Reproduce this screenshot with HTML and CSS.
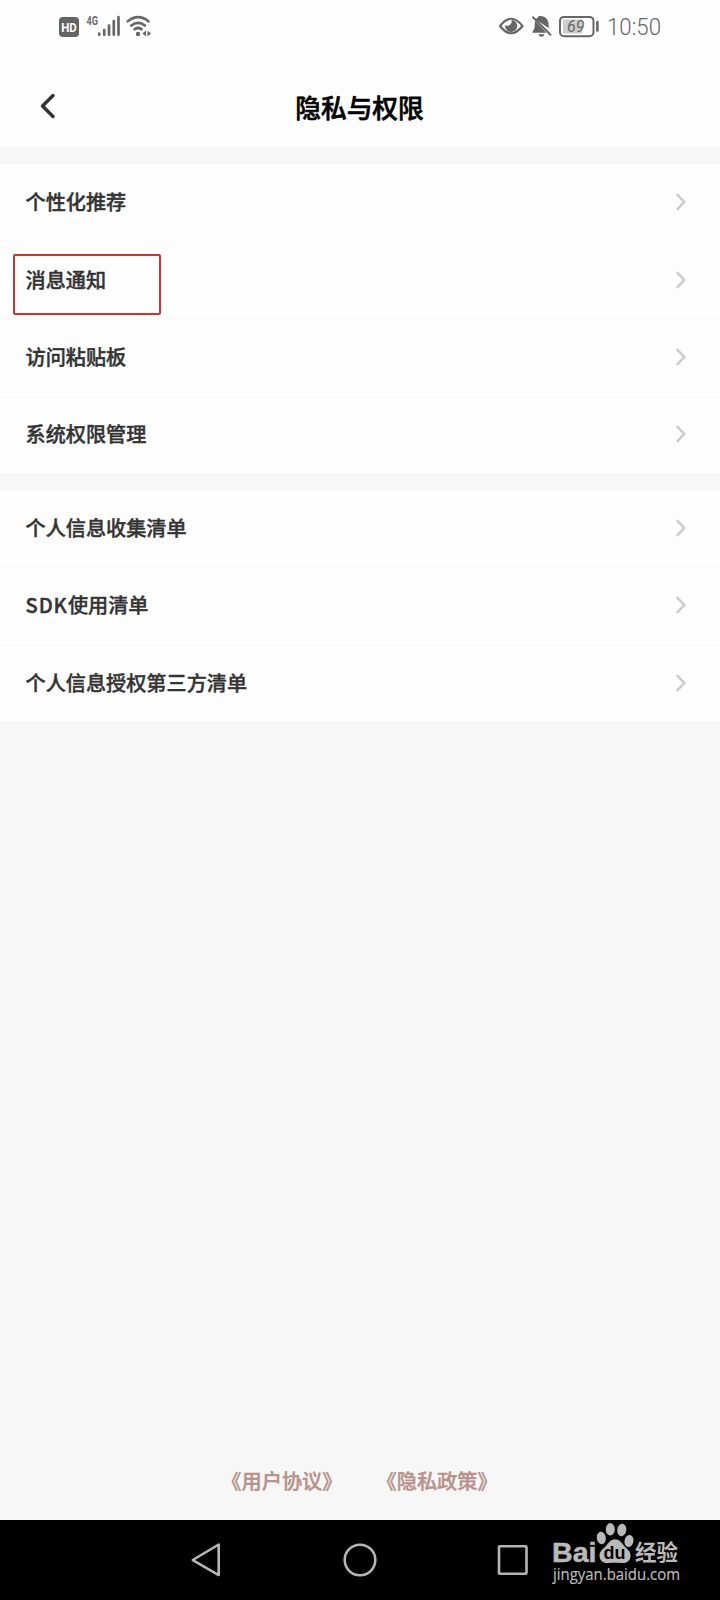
FILE: index.html
```html
<!DOCTYPE html>
<html lang="zh-CN">
<head>
<meta charset="utf-8">
<title>隐私与权限</title>
<link rel="stylesheet" href="styles.css">
</head>
<body>
<svg class="defs" width="0" height="0"><symbol id="chevron" viewBox="0 0 12 20"><path d="M1.800 2.200 9.300 10 1.800 17.800" fill="none" stroke="currentColor" stroke-width="2.500"/></symbol></svg>
<div class="screen">
  <div class="status">
    <svg class="status-left" width="96" height="28" viewBox="56 12 96 28">
      <rect x="59" y="17" width="20" height="20" rx="4" fill="#646464"/>
      <text class="hd" x="61.3" y="31.8" textLength="15.5" lengthAdjust="spacingAndGlyphs">HD</text>
      <text class="net" x="86.5" y="25" textLength="11.5" lengthAdjust="spacingAndGlyphs">4G</text>
      <g stroke="#676767" stroke-width="2.700" stroke-linecap="round"><path d="M99.200 33.700v1M104.200 30v4.700M109 25.500v9.200M113.800 21v13.700M118.500 17.200v17.500"/></g>
      <g fill="none" stroke="#676767" stroke-width="2.700" stroke-linecap="round"><path d="M127.800 21.300q10.300-8.200 20.600 0M131.300 25.500q6.800-5.200 13.600 0M134.700 29.200q3.400-2.400 6.800 0"/></g>
      <circle cx="138" cy="34" r="2.200" fill="#676767"/>
      <path d="M146 30.500v6l-3.600-3zM147.500 30.500v6l3.600-3z" fill="#676767"/>
    </svg>
    <svg class="status-right" width="170" height="28" viewBox="496 12 170 28">
      <path d="M500 26q11-14.500 22.500 0-11.500 14.500-22.500 0z" fill="none" stroke="#666" stroke-width="2.200" stroke-linejoin="round"/>
      <path d="M511.500 20a6 6 0 1 1-6.300 5.200q3.300 1.300 5.200-.7 1.800-2 1.100-4.500z" fill="#666"/>
      <path d="M535.500 19.300q3-2 3.300-3.200 5-1 8 2.600 2.300 3 1.900 7.500l.2 2zM535 20.800 546.500 32.800H532.500q-.7-1.100 1-2.600 1.200-1.200 1.200-4.400zM538.500 34.300h6q-.7 2.500-3 2.500t-3-2.500z" fill="#666"/>
      <path d="m533 17.300 17.500 17.500" stroke="#666" stroke-width="2" stroke-linecap="round"/>
      <rect x="560" y="16.900" width="33.500" height="19.300" rx="4" fill="none" stroke="#666" stroke-width="2"/>
      <path d="M564 19.500h18v14h-18q-1 0-1-1v-12q0-1 1-1z" fill="#cdcdcd"/>
      <path d="M597.400 22v8.500" stroke="#666" stroke-width="2.600" stroke-linecap="round"/>
      <text class="battery" x="567" y="32.300" textLength="17.500" lengthAdjust="spacingAndGlyphs">69</text>
      <text class="clock" x="607" y="35.300" textLength="54" lengthAdjust="spacingAndGlyphs">10:50</text>
    </svg>
  </div>
  <header class="header">
    <svg class="back" width="18" height="28" viewBox="0 0 18 28"><path d="M14 3.500 3.500 14 14 24.500" fill="none" stroke="#333" stroke-width="3.500" stroke-linecap="round" stroke-linejoin="round"/></svg>
    <h1 class="title">隐私与权限</h1>
  </header>
  <main class="content">
    <section class="group">
      <div class="row"><span>个性化推荐</span><svg class="arrow"><use href="#chevron"/></svg></div>
      <div class="row marked"><span>消息通知</span><svg class="arrow"><use href="#chevron"/></svg></div>
      <div class="row"><span>访问粘贴板</span><svg class="arrow"><use href="#chevron"/></svg></div>
      <div class="row"><span>系统权限管理</span><svg class="arrow"><use href="#chevron"/></svg></div>
    </section>
    <section class="group">
      <div class="row"><span>个人信息收集清单</span><svg class="arrow"><use href="#chevron"/></svg></div>
      <div class="row"><span><span class="latin">SDK</span>使用清单</span><svg class="arrow"><use href="#chevron"/></svg></div>
      <div class="row"><span>个人信息授权第三方清单</span><svg class="arrow"><use href="#chevron"/></svg></div>
    </section>
    <footer class="links"><span>《用户协议》</span><span>《隐私政策》</span></footer>
  </main>
  <nav class="navbar">
    <svg width="720" height="80" viewBox="0 1520 720 80">
      <g fill="none" stroke="#b5b5b5" stroke-width="2.600" stroke-linejoin="round">
        <path d="M218.700 1544.500v30.500L192.800 1560z"/>
        <circle cx="360" cy="1560" r="15.300"/>
        <rect x="499" y="1546.300" width="27.500" height="27.500" rx="1"/>
      </g>
      <g fill="#b9b9b9">
        <text class="brand" x="552" y="1562" textLength="44.500" lengthAdjust="spacingAndGlyphs">Bai</text>
        <ellipse cx="601.300" cy="1538" rx="4.500" ry="6.200" transform="rotate(-8 601.300 1538)"/>
        <ellipse cx="610.300" cy="1529.300" rx="4.500" ry="6.200"/>
        <ellipse cx="621.800" cy="1530" rx="4.500" ry="6.200" transform="rotate(8 621.800 1530)"/>
        <ellipse cx="629" cy="1541" rx="4.500" ry="6" transform="rotate(10 629 1541)"/>
        <path d="M615 1539.300c5 0 7 4.200 10 7.500 3 3.200 6 5 5.500 9.700-.5 5-4.500 6.800-8.500 6.500-5-.5-9-.5-14 0-5 .3-8.500-2.500-8.500-7.500 0-4 3-6.200 6-9 3-3.500 5-7.200 9.500-7.200z"/>
        <text class="brand-cn" x="635" y="1560.300" textLength="43" lengthAdjust="spacingAndGlyphs">经验</text>
        <text class="site" x="553" y="1579.800" textLength="127" lengthAdjust="spacingAndGlyphs">jingyan.baidu.com</text>
      </g>
      <text class="du" x="603.500" y="1559" textLength="22" lengthAdjust="spacingAndGlyphs">du</text>
    </svg>
  </nav>
</div>
</body>
</html>
```
FILE: styles.css
```css
*, *::after { box-sizing: border-box; }
body { margin: 0; font-family: "Noto Sans CJK SC", sans-serif; background: #f7f7f7; }
.defs { position: absolute; }
.screen { width: 720px; height: 1600px; display: flex; flex-direction: column; }
.status { height: 60px; padding: 12px 54px 0 56px; display: flex; justify-content: space-between; background: #fefefe; }
.hd { font: bold 12px Roboto, sans-serif; fill: #fff; }
.net { font: bold 12.5px Roboto, sans-serif; fill: #6b6b6b; }
.battery { font: italic 17px Roboto, sans-serif; fill: #666; }
.clock { font: 300 24px Roboto, sans-serif; fill: #666; }
.header { height: 87px; background: #fefefe; display: grid; grid-template-columns: 80px 1fr 80px; align-items: center; padding-top: 7px; }
.back { margin-left: 39px; margin-top: -2px; }
.title { margin: 0; font-size: 25.7px; font-weight: 500; line-height: 38px; text-align: center; color: #000; padding-right: 1px; -webkit-text-stroke: 0.6px #000; }
.content { flex: 1; padding-top: 17px; display: flex; flex-direction: column; }
.group { background: #fefefe; margin-bottom: 17px; }
.row { height: 77.25px; padding: 0 33px 1px 25.5px; display: flex; align-items: center; justify-content: space-between; font-size: 20.15px; font-weight: 500; line-height: 30px; color: #333; -webkit-text-stroke: 0.4px #333; position: relative; }
.row + .row { border-top: 1px solid #f9f9f9; }
.group + .group { margin-top: -0.5px; }
.marked::after { content: ""; position: absolute; left: 13px; top: 12px; width: 148px; height: 61px; border: 2px solid #cc3431; border-radius: 2px; }
.latin { letter-spacing: 0.9px; }
.arrow { width: 12px; height: 20px; color: #ccc; }
.links { margin-top: auto; height: 80px; display: flex; justify-content: center; gap: 34px; font-size: 20.2px; font-weight: 500; line-height: 30px; color: #b6928a; -webkit-text-stroke: 0.4px #b6928a; padding: 26px 1px 0 0; margin-bottom: 0; }
.navbar { height: 80px; background: #000; }
.navbar svg { display: block; }
.brand { font: bold 27px "Liberation Sans", sans-serif; stroke: #b9b9b9; stroke-width: 0.5px; }
.brand-cn { font: bold 22px "Noto Sans CJK SC", sans-serif; }
.site { font: 15.5px "Open Sans", sans-serif; stroke: #b9b9b9; stroke-width: 0.2px; }
.du { font: bold 19px "Liberation Sans", sans-serif; fill: #000; }
```
